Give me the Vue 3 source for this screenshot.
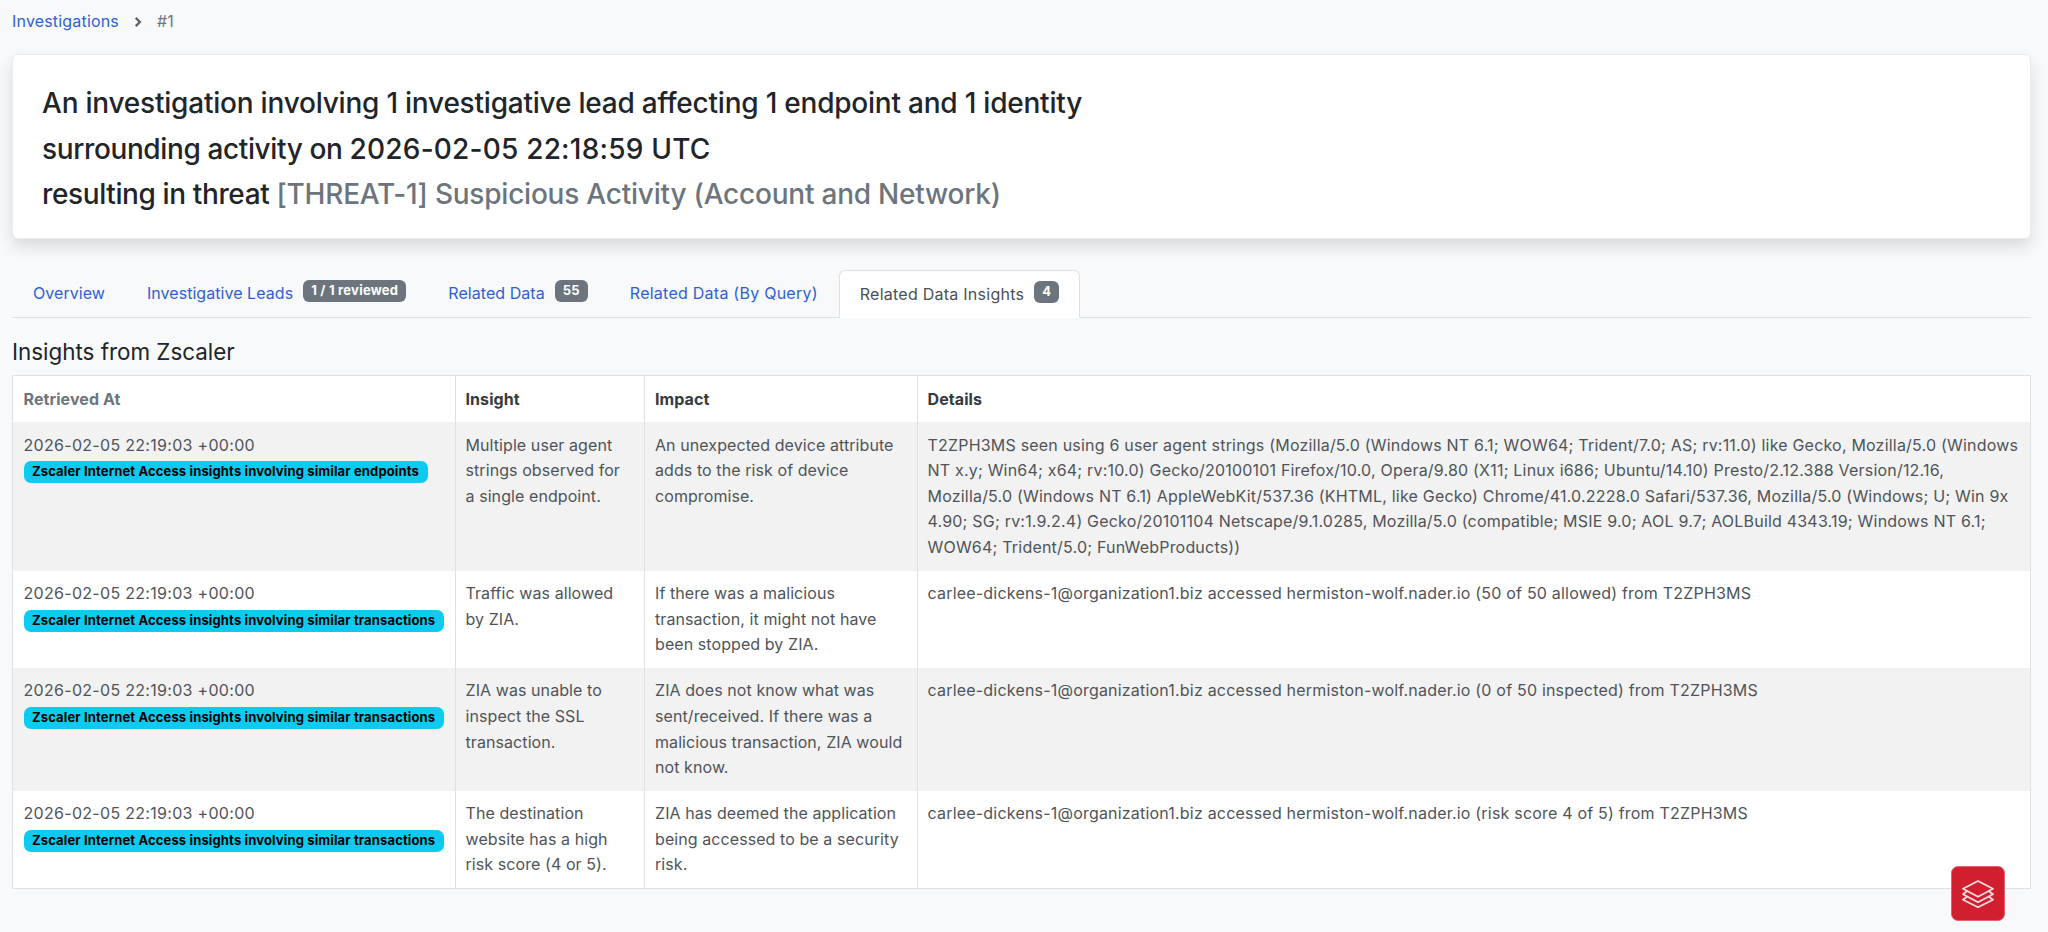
<template>
  <div class="page">
    <nav class="crumbs">
      <a class="link">Investigations</a>
      <svg class="crumb-sep" viewBox="0 0 16 16" width="12" height="12">
        <path d="M5 2.5 10.5 8 5 13.5" fill="none" stroke="#5c646b" stroke-width="3" />
      </svg>
      <span class="crumb-current">#1</span>
    </nav>

    <div class="summary-card">
      <div>An investigation involving 1 investigative lead affecting 1 endpoint and 1 identity</div>
      <div class="tight">surrounding activity on <span class="stamp">2026-02-05 22:18:59 UTC</span></div>
      <div class="tight">resulting in threat <span class="threat">[THREAT-1] Suspicious Activity (Account and Network)</span></div>
    </div>

    <ul class="tabs">
      <li v-for="tab in tabs" :key="tab.label" class="tab" :class="{ active: tab.active }">
        <span>{{ tab.label }}</span>
        <span v-if="tab.badge" class="count">{{ tab.badge }}</span>
      </li>
    </ul>

    <h2 class="section-title">Insights from Zscaler</h2>

    <table class="insights">
      <colgroup>
        <col class="col-time" />
        <col class="col-insight" />
        <col class="col-impact" />
        <col />
      </colgroup>
      <thead>
        <tr>
          <th class="muted">Retrieved At</th>
          <th>Insight</th>
          <th>Impact</th>
          <th>Details</th>
        </tr>
      </thead>
      <tbody>
        <tr v-for="(row, i) in rows" :key="i">
          <td>
            <div class="time">2026-02-05 22:19:03 +00:00</div>
            <span class="source">{{ row.source }}</span>
          </td>
          <td class="insight">{{ row.insight }}</td>
          <td>{{ row.impact }}</td>
          <td class="details">{{ row.details }}</td>
        </tr>
      </tbody>
    </table>

    <button class="stack-btn">
      <svg viewBox="0 0 32 28" width="32" height="28" fill="none" stroke="#f6dfe1" stroke-width="1.7" stroke-linejoin="round" stroke-linecap="round">
        <path d="M16 1 31 8.7 16 16.8 1 8.7z" />
        <path d="M5 11.3 1 14.2 16 22.3 31 14.2 27 11.3" />
        <path d="M5 16.8 1 19.7 16 27.2 31 19.7 27 16.8" />
      </svg>
    </button>
  </div>
</template>

<script setup>
const tabs = [
  { label: 'Overview' },
  { label: 'Investigative Leads', badge: '1 / 1 reviewed' },
  { label: 'Related Data', badge: '55' },
  { label: 'Related Data (By Query)' },
  { label: 'Related Data Insights', badge: '4', active: true }
]

const rows = [
  {
    source: 'Zscaler Internet Access insights involving similar endpoints',
    insight: 'Multiple user agent strings observed for a single endpoint.',
    impact: 'An unexpected device attribute adds to the risk of device compromise.',
    details: 'T2ZPH3MS seen using 6 user agent strings (Mozilla/5.0 (Windows NT 6.1; WOW64; Trident/7.0; AS; rv:11.0) like Gecko, Mozilla/5.0 (Windows NT x.y; Win64; x64; rv:10.0) Gecko/20100101 Firefox/10.0, Opera/9.80 (X11; Linux i686; Ubuntu/14.10) Presto/2.12.388 Version/12.16, Mozilla/5.0 (Windows NT 6.1) AppleWebKit/537.36 (KHTML, like Gecko) Chrome/41.0.2228.0 Safari/537.36, Mozilla/5.0 (Windows; U; Win 9x 4.90; SG; rv:1.9.2.4) Gecko/20101104 Netscape/9.1.0285, Mozilla/5.0 (compatible; MSIE 9.0; AOL 9.7; AOLBuild 4343.19; Windows NT 6.1; WOW64; Trident/5.0; FunWebProducts))'
  },
  {
    source: 'Zscaler Internet Access insights involving similar transactions',
    insight: 'Traffic was allowed by ZIA.',
    impact: 'If there was a malicious transaction, it might not have been stopped by ZIA.',
    details: 'carlee-dickens-1@organization1.biz accessed hermiston-wolf.nader.io (50 of 50 allowed) from T2ZPH3MS'
  },
  {
    source: 'Zscaler Internet Access insights involving similar transactions',
    insight: 'ZIA was unable to inspect the SSL transaction.',
    impact: 'ZIA does not know what was sent/received. If there was a malicious transaction, ZIA would not know.',
    details: 'carlee-dickens-1@organization1.biz accessed hermiston-wolf.nader.io (0 of 50 inspected) from T2ZPH3MS'
  },
  {
    source: 'Zscaler Internet Access insights involving similar transactions',
    insight: 'The destination website has a high risk score (4 or 5).',
    impact: 'ZIA has deemed the application being accessed to be a security risk.',
    details: 'carlee-dickens-1@organization1.biz accessed hermiston-wolf.nader.io (risk score 4 of 5) from T2ZPH3MS'
  }
]
</script>

<style>
html,
body {
  background: #f8f9fb;
}
</style>

<style scoped>
.page {
  position: relative;
  height: 932px;
  box-sizing: border-box;
  padding: 9px 17px 0 12px;
  font-family: Inter, "Liberation Sans", sans-serif;
  font-size: 16px;
  line-height: 25.6px;
  color: #4f5459;
  background: #f8f9fb;
  overflow: hidden;
}

.crumbs {
  display: flex;
  align-items: center;
  height: 25px;
  letter-spacing: 0.18px;
}

.link {
  color: #2f5fd8;
}

.crumb-sep {
  margin: 0 13px;
}

.crumb-current {
  color: #6c757d;
}

.summary-card {
  margin-top: 20px;
  height: 185px;
  box-sizing: border-box;
  padding: 26px 29px;
  background: #fff;
  border: 1px solid #e9ecef;
  border-radius: 6px;
  box-shadow: 0 8px 16px rgba(0, 0, 0, 0.12);
  font-size: 28px;
  font-weight: 500;
  letter-spacing: -0.22px;
  line-height: 45.6px;
  color: #212529;
}

.tight {
  letter-spacing: -0.38px;
}

.stamp {
  letter-spacing: 0.21px;
}

.threat {
  color: #6c757d;
  letter-spacing: -0.22px;
}

.tabs {
  display: flex;
  margin: 31px 0 0;
  padding: 0;
  list-style: none;
  height: 47px;
  border-bottom: 1px solid #dee2e6;
  letter-spacing: 0.05px;
}

.tab {
  display: flex;
  align-items: center;
  gap: 10px;
  height: 47px;
  box-sizing: border-box;
  padding: 1.5px 20px 0;
  color: #2f5fd8;
  border: 1px solid transparent;
  border-radius: 6px 6px 0 0;
}

.tab:nth-child(n + 4) {
  letter-spacing: 0.25px;
}

.tab.active {
  color: #495057;
  background: #fff;
  border-color: #dee2e6 #dee2e6 #fff;
  height: 48px;
}

.count {
  display: inline-block;
  padding: 0 8px;
  height: 22px;
  line-height: 21px;
  font-size: 13px;
  font-weight: 700;
  letter-spacing: 0.25px;
  color: #fff;
  background: #6c757d;
  border-radius: 6px;
  position: relative;
  top: -3px;
}

.section-title {
  margin: 19px 0 0;
  font-size: 22.4px;
  font-weight: 400;
  line-height: 30px;
  color: #212529;
}

.insights {
  width: 100%;
  margin-top: 7.5px;
  border-collapse: collapse;
  table-layout: fixed;
  background: #fff;
  border: 1px solid #dee2e6;
  letter-spacing: 0.08px;
}

.col-time {
  width: 443px;
}

.col-insight {
  width: 189px;
}

.col-impact {
  width: 273px;
}

.insights th,
.insights td {
  padding: 10.5px 10px 10px;
  border-left: 1px solid #dee2e6;
  text-align: left;
  vertical-align: top;
}

.insights td:first-child,
.insights th:first-child {
  padding-left: 10.5px;
}

.insights td:nth-child(even),
.insights th:nth-child(even) {
  padding-left: 9.5px;
}

.insights td.insight {
  padding-right: 14px;
}

.insights th {
  padding-top: 11.5px;
  padding-bottom: 9.5px;
  font-weight: 700;
  color: #343a40;
}

.insights th.muted {
  color: #6c757d;
}

.insights tbody tr:nth-child(odd) td {
  background: #f2f2f3;
}

.time {
  letter-spacing: 0.3px;
}

/* 9x must not turn into a multiplication sign */
.details {
  letter-spacing: 0.2px;
  font-feature-settings: "calt" 0;
}

.source {
  display: block;
  width: max-content;
  height: 22px;
  margin-top: 3px;
  padding: 0 8.5px;
  line-height: 21px;
  font-size: 13px;
  font-weight: 700;
  letter-spacing: 0.14px;
  color: #000;
  background: #0dcaf0;
  border-radius: 7px;
}

.stack-btn {
  position: absolute;
  left: 1951px;
  top: 866px;
  display: flex;
  align-items: center;
  justify-content: center;
  width: 54px;
  height: 55px;
  padding: 0;
  background: #d0202f;
  border: 1px solid #e8626d;
  border-radius: 7px;
}
</style>
